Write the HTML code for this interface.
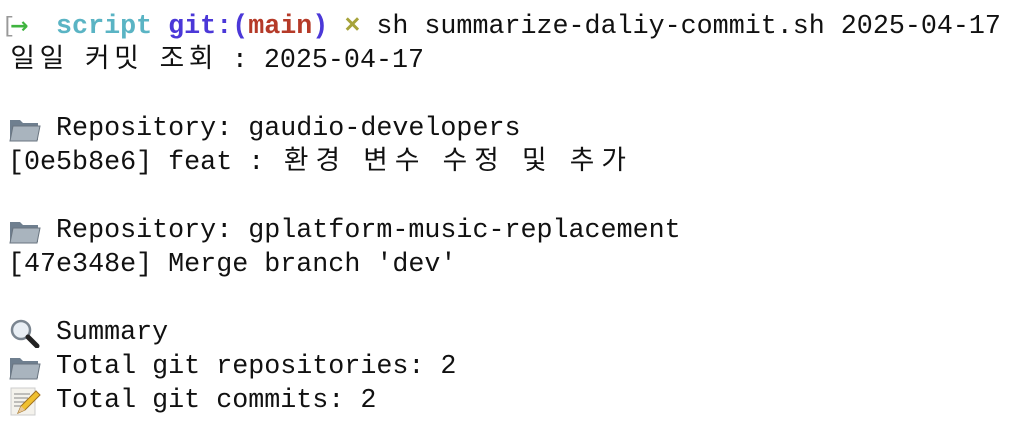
<!DOCTYPE html>
<html><head><meta charset="utf-8"><style>
body{margin:0;background:#fff;width:1024px;height:432px;overflow:hidden;}
.t{position:absolute;left:8px;top:10px;font-family:"Liberation Mono","Noto Sans CJK KR",monospace;font-size:26.7px;line-height:34px;color:#111;}
.l{height:34px;position:relative;white-space:pre}
.k{display:inline-block;width:29.3px;text-align:center}
.k2{display:inline-block;width:31.7px;text-align:center}
b{font-weight:bold}
.ic{position:absolute;left:0;top:2px}
</style></head><body>
<div class="t"><div class="l"><span style="position:absolute;left:-6px;top:0;color:#999;font-size:22px">[</span><span style="position:absolute;left:2px;color:#3fb43f;font-size:22px;font-family:'DejaVu Sans'"><b>→</b></span>   <b style="color:#5ab4c4">script</b> <b style="color:#4b38d8">git:(</b><b style="color:#b53a28">main</b><b style="color:#4b38d8">)</b> <b style="color:#a6a33a">×</b> sh summarize-daliy-commit.sh 2025-04-17</div><div class="l"><span class="k">일</span><span class="k">일</span> <span class="k">커</span><span class="k">밋</span> <span class="k">조</span><span class="k">회</span> : 2025-04-17</div><div class="l"></div><div class="l"><svg class="ic" width="34" height="30" viewBox="0 0 34 30"><path d="M2 6h10l3 3h15v17H2z" fill="#6f7f8f"/><path d="M5 12h27l-3 15H2z" fill="#a9b4be" stroke="#6a7580"/></svg>   Repository: gaudio-developers</div><div class="l">[0e5b8e6] feat : <span class="k2">환</span><span class="k2">경</span> <span class="k2">변</span><span class="k2">수</span> <span class="k2">수</span><span class="k2">정</span> <span class="k2">및</span> <span class="k2">추</span><span class="k2">가</span></div><div class="l"></div><div class="l"><svg class="ic" width="34" height="30" viewBox="0 0 34 30"><path d="M2 6h10l3 3h15v17H2z" fill="#6f7f8f"/><path d="M5 12h27l-3 15H2z" fill="#a9b4be" stroke="#6a7580"/></svg>   Repository: gplatform-music-replacement</div><div class="l">[47e348e] Merge branch 'dev'</div><div class="l"></div><div class="l"><svg class="ic" width="34" height="30" viewBox="0 0 34 30"><circle cx="13" cy="12" r="9" fill="#e8eef4" stroke="#7a8590" stroke-width="2.5"/><path d="M20 19l9 9" stroke="#222" stroke-width="5" stroke-linecap="round"/></svg>   Summary</div><div class="l"><svg class="ic" width="34" height="30" viewBox="0 0 34 30"><path d="M2 6h10l3 3h15v17H2z" fill="#6f7f8f"/><path d="M5 12h27l-3 15H2z" fill="#a9b4be" stroke="#6a7580"/></svg>   Total git repositories: 2</div><div class="l"><svg class="ic" width="34" height="30" viewBox="0 0 34 30"><rect x="3" y="2" width="24" height="27" fill="#f4f2ec" stroke="#ccc"/><path d="M6 8h16M6 12h14M6 16h12M6 20h10" stroke="#888" stroke-width="1"/><path d="M10 27l3-7 15-15 4 4-15 15z" fill="#f0c030" stroke="#a07020"/><path d="M10 27l3-7 4 4z" fill="#e8c89a"/></svg>   Total git commits: 2</div></div>
</body></html>
